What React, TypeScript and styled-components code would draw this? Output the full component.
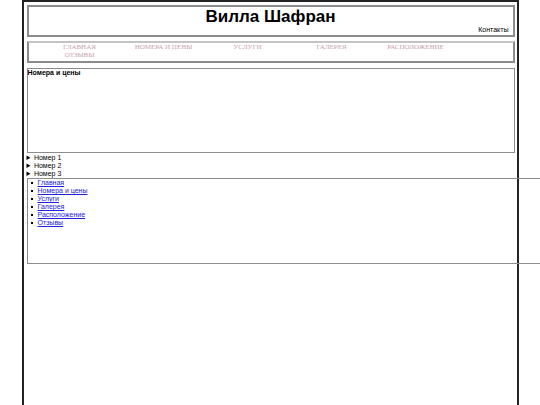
import React from 'react';
import styled, { createGlobalStyle } from 'styled-components';

const GlobalStyle = createGlobalStyle`
  html, body {
    margin: 0;
    padding: 0;
    background: #fff;
    font-family: 'Liberation Sans', Arial, sans-serif;
    overflow: hidden;
  }
`;

const Page = styled.div`
  width: 490px;
  min-height: 420px;
  margin: 0 auto;
  border: 2px solid #222;
  border-bottom: none;
  padding: 3px 0 0 3px;
  box-sizing: content-box;
`;

const Header = styled.header`
  border: 2px solid #8c8c8c;
  height: 28px;
  margin-right: 2px;
  padding: 0 4px;
  display: flex;
  flex-direction: column;
`;

const Title = styled.h1`
  margin: 0;
  text-align: center;
  font-size: 17px;
  line-height: 19px;
  font-weight: bold;
  color: #000;
`;

const Contacts = styled.div`
  text-align: right;
  font-size: 7px;
  line-height: 8px;
  color: #000;
`;

const Nav = styled.nav`
  margin: 4px 2px 0 0;
  border: 2px solid #8c8c8c;
  border-top-color: #c4c4c4;
  height: 18px;
  padding: 0 9px;
`;

const NavList = styled.ul`
  list-style: none;
  margin: 0;
  padding: 0;
  display: flex;
  flex-wrap: wrap;
  width: 440px;
`;

const NavItem = styled.li`
  width: 84px;
  text-align: center;
  font-family: 'Liberation Serif', 'Times New Roman', serif;
  font-size: 7px;
  line-height: 8px;
  color: #c8a0aa;
  text-transform: uppercase;
`;

const Content = styled.section`
  margin: 5px 2px 0 0;
  border: 1px solid #8c8c8c;
  height: 83px;
`;

const SectionTitle = styled.h2`
  margin: 0;
  font-size: 7px;
  line-height: 8px;
  font-weight: bold;
  color: #000;
`;

const Rooms = styled.div`
  margin-top: 1px;
  font-size: 7px;
  line-height: 8px;
`;

const Room = styled.details`
  summary {
    cursor: pointer;
  }
`;

const LinkBox = styled.div`
  border: 1px solid #8c8c8c;
  width: 560px;
  height: 84px;
`;

const LinkList = styled.ul`
  margin: 0;
  padding: 0;
  list-style: none;
  font-size: 7px;
  line-height: 8px;
`;

const LinkItem = styled.li`
  &::before {
    content: '';
    display: inline-block;
    width: 2px;
    height: 2px;
    margin: 0 5px 1px 3px;
    background: #000;
  }
  a {
    color: #2222dd;
  }
`;

const navItems = ['Главная', 'Номера и цены', 'Услуги', 'Галерея', 'Расположение', 'Отзывы'];
const rooms = ['Номер 1', 'Номер 2', 'Номер 3'];

export default function App() {
  return (
    <>
      <GlobalStyle />
      <Page>
        <Header>
          <Title>Вилла Шафран</Title>
          <Contacts>Контакты</Contacts>
        </Header>
        <Nav>
          <NavList>
            {navItems.map((item) => (
              <NavItem key={item}>{item}</NavItem>
            ))}
          </NavList>
        </Nav>
        <Content>
          <SectionTitle>Номера и цены</SectionTitle>
        </Content>
        <Rooms>
          {rooms.map((r) => (
            <Room key={r}>
              <summary>{r}</summary>
            </Room>
          ))}
        </Rooms>
        <LinkBox>
          <LinkList>
            {navItems.map((item) => (
              <LinkItem key={item}>
                <a href="#">{item}</a>
              </LinkItem>
            ))}
          </LinkList>
        </LinkBox>
      </Page>
    </>
  );
}
